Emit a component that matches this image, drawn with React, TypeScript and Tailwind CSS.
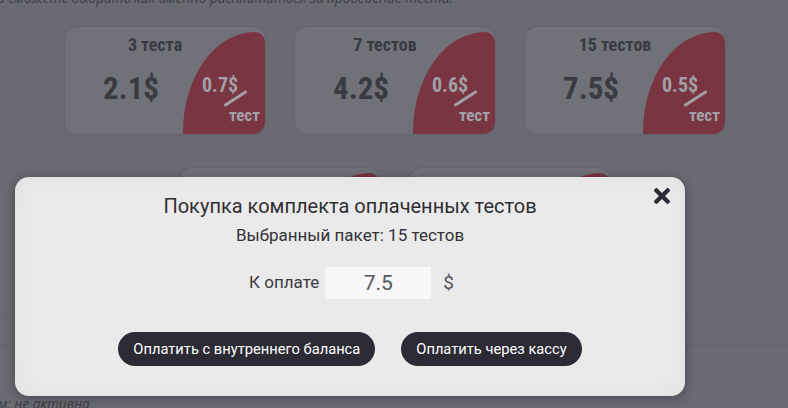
import type { CSSProperties } from "react";

type Pack = { title: string; price: string; per: string };

const PACKS: Pack[] = [
  { title: "3 теста", price: "2.1$", per: "0.7$" },
  { title: "7 тестов", price: "4.2$", per: "0.6$" },
  { title: "15 тестов", price: "7.5$", per: "0.5$" },
  { title: "30 тестов", price: "12$", per: "0.4$" },
  { title: "50 тестов", price: "15$", per: "0.3$" },
];

const condensed = "font-['Roboto_Condensed','Liberation_Sans_Narrow','DejaVu_Sans_Condensed',Roboto,sans-serif]";

function PackCard({ pack }: { pack: Pack }) {
  return (
    <div className={`relative h-[107px] w-[200px] overflow-hidden rounded-[12px] bg-[#707179] shadow-[0_0_3px_rgba(0,0,0,0.12)] ${condensed}`}>
      <div className="pr-[20px] pt-[7px] text-center text-[18px] font-bold leading-[22px] text-[#393a42]">
        {pack.title}
      </div>
      <div className="mt-[15px] w-[132px] text-center text-[31px] font-bold leading-[36px] text-[#393a42]">
        {pack.price}
      </div>
      <div className="absolute bottom-0 right-0 h-[102px] w-[82px] rounded-tl-[72px_100px] rounded-tr-[10px] bg-[#793541]">
        <span className="absolute left-[19px] top-[41px] text-[20px] font-bold leading-[24px] text-[#a39fa6]">
          {pack.per}
        </span>
        <span className="absolute left-[39px] top-[65px] h-[3px] w-[27px] -rotate-[33deg] rounded-full bg-[#a39fa6]" />
        <span className="absolute left-[46px] top-[73px] text-[17px] font-bold leading-[20px] text-[#a39fa6]">
          тест
        </span>
      </div>
    </div>
  );
}

function CloseIcon({ style }: { style?: CSSProperties }) {
  return (
    <svg viewBox="0 80 352 352" width="16" height="16" fill="currentColor" style={style}>
      <path d="M242.72 256l100.07-100.07c12.28-12.28 12.28-32.19 0-44.48l-22.24-22.24c-12.28-12.28-32.19-12.28-44.48 0L176 189.28 75.93 89.21c-12.28-12.28-32.19-12.28-44.48 0L9.21 111.45c-12.28 12.28-12.28 32.19 0 44.48L109.28 256 9.21 356.07c-12.28 12.28-12.28 32.19 0 44.48l22.24 22.24c12.28 12.28 32.2 12.28 44.48 0L176 322.72l100.07 100.07c12.28 12.28 32.2 12.28 44.48 0l22.24-22.24c12.28-12.28 12.28-32.19 0-44.48L242.72 256z" />
    </svg>
  );
}

export default function App() {
  return (
    <div className="relative h-[408px] w-full overflow-hidden bg-[#696a72]">
      {/* page behind the dialog */}
      <p className="-ml-[3px] -mt-[12px] whitespace-nowrap font-['Open_Sans',sans-serif] text-[13.6px] italic leading-[20px] text-[#3d3e46]">
        и сможете выбрать как именно расплатиться за проведение теста.
      </p>

      <div className="mx-auto mt-[19px] flex w-[660px] translate-x-[1px] flex-wrap justify-center gap-x-[30px] gap-y-[34px]">
        {PACKS.map((p) => (
          <PackCard key={p.title} pack={p} />
        ))}
      </div>

      <div className="mt-[40px] h-[30px] border-y border-[#64656c]" />

      <p className="-ml-[2px] mt-[49px] whitespace-nowrap font-['Open_Sans',sans-serif] text-[13.6px] italic leading-[20px] text-[#3d3e46]">
        м: не активна
      </p>

      {/* dialog */}
      <div className="absolute left-[15px] top-[177px] h-[219px] w-[670px] rounded-[14px] bg-[#eaeaea] font-['Roboto',sans-serif] shadow-[0_2px_12px_rgba(0,0,0,0.3),inset_0_0_24px_rgba(0,0,0,0.04)]">
        <button type="button" className="absolute right-[15px] top-[11px] text-[#2c2c36]">
          <CloseIcon />
        </button>
        <h2 className="pt-[17px] text-center text-[20px] leading-[24px] text-[#2f2f33]">
          Покупка комплекта оплаченных тестов
        </h2>
        <p className="mt-[7px] text-center text-[17px] leading-[20px] text-[#333338]">
          Выбранный пакет: 15 тестов
        </p>
        <div className="mt-[22px] flex items-center justify-center gap-[6px] pl-[3px]">
          <span className="text-[17px] text-[#3b3b40]">К оплате</span>
          <input
            readOnly
            value="7.5"
            className="h-[32px] w-[106px] bg-[#f7f7f7] text-center text-[21px] text-[#55555a] outline-none"
          />
          <span className="ml-[6px] text-[19px] text-[#55555a]">$</span>
        </div>
        <div className="mt-[33px] flex justify-center gap-[26px]">
          <button type="button" className="h-[34px] rounded-full bg-[#2c2b35] px-[15px] text-[14.7px] text-white">
            Оплатить с внутреннего баланса
          </button>
          <button type="button" className="h-[34px] rounded-full bg-[#2c2b35] px-[15px] text-[14.7px] text-white">
            Оплатить через кассу
          </button>
        </div>
      </div>
    </div>
  );
}
